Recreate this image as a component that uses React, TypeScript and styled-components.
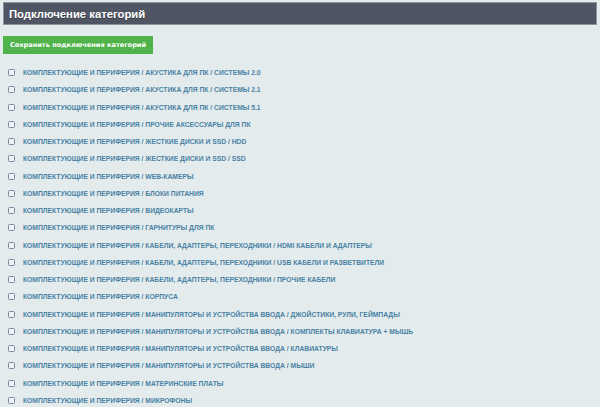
import React from "react";
import styled, { createGlobalStyle } from "styled-components";

const Global = createGlobalStyle`
  html, body { margin: 0; padding: 0; background: #e3ebed; }
  body { font-family: "Liberation Sans", Arial, sans-serif; }
`;

const Page = styled.div`
  padding: 2px 3px 0 3px;
  display: flex;
  flex-direction: column;
`;

const Header = styled.div`
  height: 21px;
  background: #4f5563;
  border: 1px solid #8c929e;
  display: flex;
  align-items: center;
  padding-left: 5px;
  color: #ffffff;
  font-weight: bold;
  font-size: 11.3px;
  text-shadow: 0 1px 0 rgba(0,0,0,0.3);
`;

const SaveButton = styled.button`
  margin-top: 11px;
  align-self: flex-start;
  width: 150px;
  height: 18px;
  border: none;
  background: #4fb34a;
  color: #ffffff;
  font-family: "DejaVu Sans", Verdana, sans-serif;
  font-weight: bold;
  font-size: 6.6px;
  padding: 0;
  cursor: pointer;
`;

const List = styled.div`
  margin-top: 10px;
  display: flex;
  flex-direction: column;
`;

const Row = styled.label`
  height: 17.25px;
  display: flex;
  align-items: center;
  padding-left: 5px;
  gap: 8px;
`;

const Box = styled.span`
  width: 5px;
  height: 5px;
  border: 1px solid #7b8aa0;
  border-radius: 1.5px;
  background: #eef3f5;
  flex: none;
`;

const Label = styled.span`
  color: #4a82a4;
  font-weight: bold;
  font-size: 6.75px;
  text-transform: uppercase;
  white-space: nowrap;
`;

const P = "КОМПЛЕКТУЮЩИЕ И ПЕРИФЕРИЯ / ";
const items = [
  "АКУСТИКА ДЛЯ ПК / СИСТЕМЫ 2.0",
  "АКУСТИКА ДЛЯ ПК / СИСТЕМЫ 2.1",
  "АКУСТИКА ДЛЯ ПК / СИСТЕМЫ 5.1",
  "ПРОЧИЕ АКСЕССУАРЫ ДЛЯ ПК",
  "ЖЕСТКИЕ ДИСКИ И SSD / HDD",
  "ЖЕСТКИЕ ДИСКИ И SSD / SSD",
  "WEB-КАМЕРЫ",
  "БЛОКИ ПИТАНИЯ",
  "ВИДЕОКАРТЫ",
  "ГАРНИТУРЫ ДЛЯ ПК",
  "КАБЕЛИ, АДАПТЕРЫ, ПЕРЕХОДНИКИ / HDMI КАБЕЛИ И АДАПТЕРЫ",
  "КАБЕЛИ, АДАПТЕРЫ, ПЕРЕХОДНИКИ / USB КАБЕЛИ И РАЗВЕТВИТЕЛИ",
  "КАБЕЛИ, АДАПТЕРЫ, ПЕРЕХОДНИКИ / ПРОЧИЕ КАБЕЛИ",
  "КОРПУСА",
  "МАНИПУЛЯТОРЫ И УСТРОЙСТВА ВВОДА / ДЖОЙСТИКИ, РУЛИ, ГЕЙМПАДЫ",
  "МАНИПУЛЯТОРЫ И УСТРОЙСТВА ВВОДА / КОМПЛЕКТЫ КЛАВИАТУРА + МЫШЬ",
  "МАНИПУЛЯТОРЫ И УСТРОЙСТВА ВВОДА / КЛАВИАТУРЫ",
  "МАНИПУЛЯТОРЫ И УСТРОЙСТВА ВВОДА / МЫШИ",
  "МАТЕРИНСКИЕ ПЛАТЫ",
  "МИКРОФОНЫ",
];

export default function App() {
  return (
    <>
      <Global />
      <Page>
        <Header>Подключение категорий</Header>
        <SaveButton>Сохранить подключения категорий</SaveButton>
        <List>
          {items.map((t) => (
            <Row key={t}>
              <Box />
              <Label>{P + t}</Label>
            </Row>
          ))}
        </List>
      </Page>
    </>
  );
}
